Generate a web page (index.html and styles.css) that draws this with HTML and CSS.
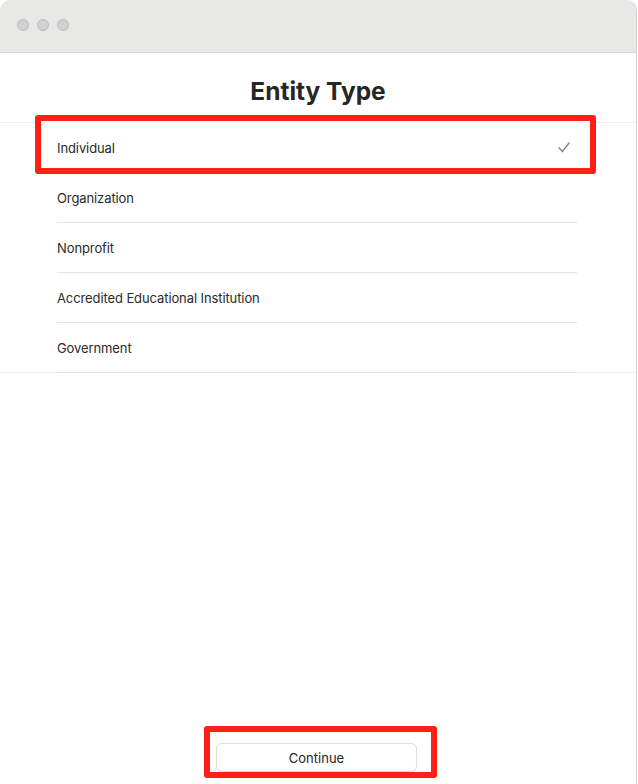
FILE: index.html
```html
<!DOCTYPE html>
<html>
<head>
<meta charset="utf-8">
<link rel="stylesheet" href="styles.css">
</head>
<body>
<div class="window">
  <div class="titlebar">
    <span class="light"></span><span class="light"></span><span class="light"></span>
  </div>
  <h1 class="title">Entity Type</h1>
  <ul class="list">
    <li class="row">Individual
      <svg class="check" width="12" height="11" viewBox="0 0 12 11"><path d="M1 5.8 L4.4 9.6 L11 1" fill="none" stroke="#8a8a8a" stroke-width="1.5" stroke-linecap="round" stroke-linejoin="round"/></svg>
    </li>
    <li class="row">Organization</li>
    <li class="row">Nonprofit</li>
    <li class="row">Accredited Educational Institution</li>
    <li class="row">Government</li>
  </ul>
  <div class="spacer"></div>
  <div class="footer">
    <button class="btn">Continue</button>
  </div>
  <div class="mark mark-row"></div>
  <div class="mark mark-btn"></div>
</div>
</body>
</html>
```
FILE: styles.css
```css
* { box-sizing: border-box; }
html, body { margin: 0; padding: 0; background: #ffffff; }
body { font-family: Inter, "Noto Sans", sans-serif; }
.window {
  position: relative;
  width: 637px;
  height: 784px;
  border-right: 1px solid #d2d2d2;
  border-top-right-radius: 10px;
  border-top-left-radius: 10px;
  overflow: hidden;
  display: flex;
  flex-direction: column;
  background: #fff;
}
.titlebar {
  height: 53px;
  flex: none;
  background: #e8e8e7;
  border-bottom: 1px solid #d6d6d6;
  display: flex;
  align-items: center;
  gap: 8px;
  padding-left: 17px;
  padding-bottom: 2px;
}
.light {
  width: 12px;
  height: 12px;
  border-radius: 50%;
  background: #d1d1d1;
  border: 1px solid #bdbdbd;
}
.title {
  margin: 0;
  height: 69px;
  flex: none;
  padding-top: 24px;
  text-align: center;
  font-size: 24.5px;
  line-height: 29px;
  font-weight: 700;
  color: #262626;
  letter-spacing: 0;
}
.list {
  list-style: none;
  margin: 0;
  padding: 0 59px 0 57px;
  border-top: 1px solid #f1f1f1;
  border-bottom: 1px solid #f1f1f1;
}
.row {
  height: 50px;
  border-bottom: 1px solid #e4e4e4;
  display: flex;
  align-items: center;
  justify-content: space-between;
  padding-right: 7px;
  font-size: 13px;
  letter-spacing: -0.1px;
  color: #2a2a2a;
}
.row:last-child { margin-bottom: -1px; }
.check { display: block; }
.spacer { flex: 1; }
.footer {
  display: flex;
  justify-content: center;
  padding: 0 3px 12px 0;
}
.btn {
  width: 201px;
  height: 29px;
  background: #fff;
  border: 1px solid #dedede;
  border-radius: 6px;
  box-shadow: 0 0.5px 1px rgba(0,0,0,0.06);
  font-family: Inter, "Noto Sans", sans-serif;
  font-size: 13px;
  color: #262626;
  padding: 0;
}
.mark {
  position: absolute;
  border: 6px solid #ff2015;
  border-radius: 3px;
}
.mark-row { left: 35px; top: 115px; width: 561px; height: 59px; }
.mark-btn { left: 204px; top: 726px; width: 233px; height: 52px; }
```
